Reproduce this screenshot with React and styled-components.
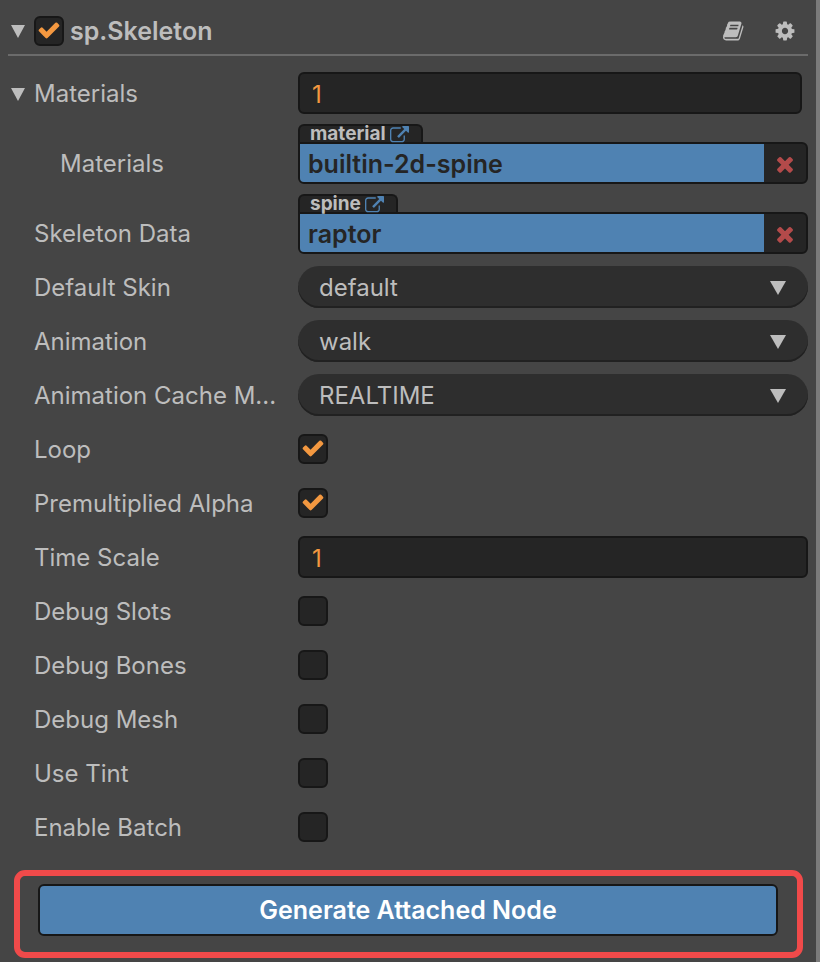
import React, { useState } from "react";
import styled, { createGlobalStyle } from "styled-components";

const GlobalStyle = createGlobalStyle`
  *, *::before, *::after { box-sizing: border-box; }
  html { background: #454545; }
  body {
    margin: 0;
    background: #454545;
    color: #bdbdbd;
    font-family: Inter, "Noto Sans", sans-serif;
    font-size: 24px;
    line-height: 30px;
  }
  button, input, select { font: inherit; }
`;

const PATHS = {
  book: "M1639 478q40 57 18 129l-275 906q-19 64-76.5 107.5t-122.5 43.5h-923q-77 0-148.5-53.5t-99.5-131.5q-24-67-2-127 0-4 3-27t4-37q1-8-3-21.5t-3-19.5q2-11 8-21t16.5-23.5 16.5-23.5q23-38 45-91.5t30-91.5q3-10 .5-30t-.5-28q3-11 17-28t17-23q21-36 42-92t25-90q1-9-2.5-32t.5-28q4-13 22-30.5t22-22.5q19-26 42.5-84.5t27.5-96.5q1-8-3-25.5t-2-26.5q2-8 9-18t18-23 17-21q8-12 16.5-30.5t15-35 16-36 19.5-32 26.5-23.5 36-11.5 47.5 5.5l-1 3q38-9 51-9h761q74 0 114 56t18 130l-274 906q-36 119-71.5 153.5t-128.5 34.5h-869q-27 0-38 15-11 16-1 43 24 70 144 70h923q29 0 56-15.5t35-41.5l300-987q7-22 5-57 38 15 59 43zm-1064 2q-4 13 2 22.5t20 9.5h608q13 0 25.5-9.5t16.5-22.5l21-64q4-13-2-22.5t-20-9.5h-608q-13 0-25.5 9.5t-16.5 22.5zm-83 256q-4 13 2 22.5t20 9.5h608q13 0 25.5-9.5t16.5-22.5l21-64q4-13-2-22.5t-20-9.5h-608q-13 0-25.5 9.5t-16.5 22.5z",
  cog: "M1152 896q0-106-75-181t-181-75-181 75-75 181 75 181 181 75 181-75 75-181zm512-109v222q0 12-8 23t-20 13l-185 28q-19 54-39 91 35 50 107 138 10 12 10 25t-9 23q-27 37-99 108t-94 71q-12 0-26-9l-138-108q-44 23-91 38-16 136-29 186-7 28-36 28h-222q-14 0-24.5-8.5t-11.5-21.5l-28-184q-49-16-90-37l-141 107q-10 9-25 9-14 0-25-11-126-114-165-168-7-10-7-23 0-12 8-23 15-21 51-66.5t54-70.5q-27-50-41-99l-183-27q-13-2-21-12.5t-8-23.5v-222q0-12 8-23t19-13l186-28q14-46 39-92-40-57-107-138-10-12-10-24 0-10 9-23 26-36 98.5-107.5t94.5-71.5q13 0 26 10l138 107q44-23 91-38 16-136 29-186 7-28 36-28h222q14 0 24.5 8.5t11.5 21.5l28 184q49 16 90 37l142-107q9-9 24-9 13 0 25 10 129 119 165 170 7 8 7 22 0 12-8 23-15 21-51 66.5t-54 70.5q26 50 41 98l183 28q13 2 21 12.5t8 23.5z",
  external: "M1408 928v320q0 119-84.5 203.5t-203.5 84.5h-832q-119 0-203.5-84.5t-84.5-203.5v-832q0-119 84.5-203.5t203.5-84.5h704q14 0 23 9t9 23v64q0 14-9 23t-23 9h-704q-66 0-113 47t-47 113v832q0 66 47 113t113 47h832q66 0 113-47t47-113v-320q0-14 9-23t23-9h64q14 0 23 9t9 23zm384-864v512q0 26-19 45t-45 19-45-19l-176-176-652 652q-10 10-23 10t-23-10l-114-114q-10-10-10-23t10-23l652-652-176-176q-19-19-19-45t19-45 45-19h512q26 0 45 19t19 45z",
  check: "M1671 566q0 40-28 68l-724 724-136 136q-28 28-68 28t-68-28l-136-136-362-362q-28-28-28-68t28-68l136-136q28-28 68-28t68 28l294 295 656-657q28-28 68-28t68 28l136 136q28 28 28 68z",
  times: "M1490 1322q0 40-28 68l-136 136q-28 28-68 28t-68-28l-294-294-294 294q-28 28-68 28t-68-28l-136-136q-28-28-28-68t28-68l294-294-294-294q-28-28-28-68t28-68l136-136q28-28 68-28t68 28l294 294 294-294q28-28 68-28t68 28l136 136q28 28 28 68t-28 68l-294 294 294 294q28 28 28 68z",
};

const Glyph = styled.svg`
  display: block;
  flex: none;
  fill: currentColor;
`;

function Icon({ name, size }) {
  return (
    <Glyph width={size} height={size} viewBox="0 0 1792 1792" aria-hidden="true">
      <path d={PATHS[name]} />
    </Glyph>
  );
}

function Triangle({ width, height }) {
  return (
    <Glyph width={width} height={height} viewBox="0 0 14 13" preserveAspectRatio="none" aria-hidden="true">
      <path d="M0 0h14L7 13z" />
    </Glyph>
  );
}

const Panel = styled.main`
  min-height: 100vh;
  padding: 6px 8px 4px;
  border-right: 4px solid #7b7b7b;
`;

const Header = styled.header`
  display: flex;
  align-items: center;
  height: 50px;
  padding: 2px 12px 0 0;
  border-bottom: 2px solid #6b6b6b;
`;

const Title = styled.h1`
  flex: 1;
  margin: 0 0 0 6px;
  font-size: 25px;
  font-weight: 600;
`;

const IconButton = styled.button`
  display: grid;
  place-items: center;
  padding: 0;
  border: 0;
  background: none;
  color: inherit;
  cursor: pointer;
`;

const Fold = styled(IconButton)`
  flex: none;
  width: 20px;
  height: 30px;
  margin-right: 6px;
`;

const Tools = styled.div`
  display: flex;
  gap: 29px;
`;

const Properties = styled.div`
  padding-top: 10px;
`;

const Row = styled.div`
  display: grid;
  grid-template-columns: 290px minmax(0, 1fr);
  align-items: ${(p) => (p.$asset ? "end" : "center")};
  padding: ${(p) => (p.$asset ? "4px 0 6px" : "6px 0")};
`;

const Name = styled.div`
  display: flex;
  align-items: center;
  height: 42px;
  padding-top: 2px;
  padding-left: ${(p) => (p.$foldable ? 0 : p.$nested ? 52 : 26)}px;
`;

const NameLabel = styled.label`
  min-width: 0;
  white-space: nowrap;
`;

const Field = styled.div`
  padding-right: ${(p) => (p.$inset ? 6 : 0)}px;
`;

const TextBox = styled.input`
  display: block;
  width: 100%;
  height: 42px;
  padding: 2px 12px 0;
  border: 2px solid #171717;
  border-radius: 6px;
  background: #252525;
  color: #f39840;
`;

const Stack = styled.div`
  display: grid;
  align-items: center;
  > * { grid-area: 1 / 1; }
  > svg { pointer-events: none; }
`;

const CheckStack = styled(Stack)`
  flex: none;
  width: 30px;
  height: 30px;
  justify-items: center;
  color: #f39840;
  > svg { margin-bottom: 2px; }
`;

const CheckInput = styled.input.attrs({ type: "checkbox" })`
  appearance: none;
  width: 30px;
  height: 30px;
  margin: 0;
  border: 2px solid #171717;
  border-radius: 6px;
  background: #252525;
`;

const SelectStack = styled(Stack)`
  > svg {
    justify-self: end;
    margin-top: 2px;
    margin-right: 22px;
  }
`;

const SelectBox = styled.select`
  appearance: none;
  width: 100%;
  height: 42px;
  padding: 2px 48px 0 21px;
  border: 0;
  border-radius: 21px;
  background: #2e2e2e;
  box-shadow: inset 0 -2px 0 #212121;
  color: #bdbdbd;
`;

const AssetTab = styled.div`
  display: flex;
  align-items: center;
  gap: 4px;
  width: fit-content;
  height: 18px;
  padding: 0 12px 0 10px;
  border: 2px solid #171717;
  border-bottom: 0;
  border-radius: 6px 6px 0 0;
  background: #252525;
  font-size: 19px;
  font-weight: 700;
  line-height: 16px;
`;

const AssetLink = styled.a`
  padding-top: 2px;
  color: #4f82b2;
`;

const AssetBox = styled.div`
  display: flex;
  height: 42px;
  border: 2px solid #171717;
  border-radius: 0 6px 6px 6px;
  background: #252525;
  overflow: hidden;
`;

const AssetValue = styled.input`
  flex: 1;
  min-width: 0;
  padding: 2px 8px 0;
  border: 0;
  background: #4f82b2;
  color: #252525;
  font-size: 25px;
  font-weight: 600;
`;

const ClearButton = styled(IconButton)`
  width: 42px;
  padding-top: 2px;
  color: #b34a4a;
`;

const Highlight = styled.div`
  margin: 16px 5px 0 6px;
  padding: 8px 19px 16px 18px;
  border: 6px solid #f04a4a;
  border-radius: 11px;
`;

const GenerateButton = styled.button`
  display: block;
  width: 100%;
  height: 52px;
  border: 2px solid #171717;
  border-radius: 6px;
  background: #4f82b2;
  color: #fff;
  font-size: 25px;
  font-weight: 600;
`;

function Check({ id, defaultChecked = false, label }) {
  const [on, setOn] = useState(defaultChecked);
  return (
    <CheckStack>
      <CheckInput id={id} aria-label={label} checked={on} onChange={(e) => setOn(e.target.checked)} />
      {on && <Icon name="check" size={24} />}
    </CheckStack>
  );
}

function Property({ id, name, asset, nested, foldable, inset, children }) {
  return (
    <Row $asset={asset}>
      <Name $nested={nested} $foldable={foldable}>
        {foldable && (
          <Fold type="button" aria-label={`Fold ${name}`}>
            <Triangle width={14} height={13} />
          </Fold>
        )}
        <NameLabel htmlFor={id}>{name}</NameLabel>
      </Name>
      <Field $inset={inset}>{children}</Field>
    </Row>
  );
}

function Asset({ id, type, value }) {
  return (
    <>
      <AssetTab>
        {type}
        <AssetLink href="#" aria-label={`Open ${type}`}>
          <Icon name="external" size={19} />
        </AssetLink>
      </AssetTab>
      <AssetBox>
        <AssetValue id={id} value={value} readOnly />
        <ClearButton type="button" aria-label={`Clear ${type}`}>
          <Icon name="times" size={24} />
        </ClearButton>
      </AssetBox>
    </>
  );
}

function Choice({ id, value }) {
  return (
    <SelectStack>
      <SelectBox id={id} defaultValue={value}>
        <option>{value}</option>
      </SelectBox>
      <Triangle width={16} height={14} />
    </SelectStack>
  );
}

const CHOICES = [
  ["skin", "Default Skin", "default"],
  ["animation", "Animation", "walk"],
  ["cache", "Animation Cache M...", "REALTIME"],
];

const PLAYBACK = [
  ["loop", "Loop"],
  ["alpha", "Premultiplied Alpha"],
];

const FLAGS = [
  ["slots", "Debug Slots"],
  ["bones", "Debug Bones"],
  ["mesh", "Debug Mesh"],
  ["tint", "Use Tint"],
  ["batch", "Enable Batch"],
];

export default function App() {
  return (
    <>
      <GlobalStyle />
      <Panel>
        <Header>
          <Fold type="button" aria-label="Fold sp.Skeleton">
            <Triangle width={14} height={13} />
          </Fold>
          <Check label="Enable sp.Skeleton" defaultChecked />
          <Title>sp.Skeleton</Title>
          <Tools>
            <IconButton type="button" aria-label="Documentation">
              <Icon name="book" size={22} />
            </IconButton>
            <IconButton type="button" aria-label="Settings">
              <Icon name="cog" size={22} />
            </IconButton>
          </Tools>
        </Header>
        <Properties>
          <Property id="materials" name="Materials" foldable inset>
            <TextBox id="materials" defaultValue="1" />
          </Property>
          <Property id="material" name="Materials" asset nested>
            <Asset id="material" type="material" value="builtin-2d-spine" />
          </Property>
          <Property id="spine" name="Skeleton Data" asset>
            <Asset id="spine" type="spine" value="raptor" />
          </Property>
          {CHOICES.map(([id, name, value]) => (
            <Property key={id} id={id} name={name}>
              <Choice id={id} value={value} />
            </Property>
          ))}
          {PLAYBACK.map(([id, name]) => (
            <Property key={id} id={id} name={name}>
              <Check id={id} defaultChecked />
            </Property>
          ))}
          <Property id="timescale" name="Time Scale">
            <TextBox id="timescale" defaultValue="1" />
          </Property>
          {FLAGS.map(([id, name]) => (
            <Property key={id} id={id} name={name}>
              <Check id={id} />
            </Property>
          ))}
        </Properties>
        <Highlight>
          <GenerateButton type="button">Generate Attached Node</GenerateButton>
        </Highlight>
      </Panel>
    </>
  );
}
